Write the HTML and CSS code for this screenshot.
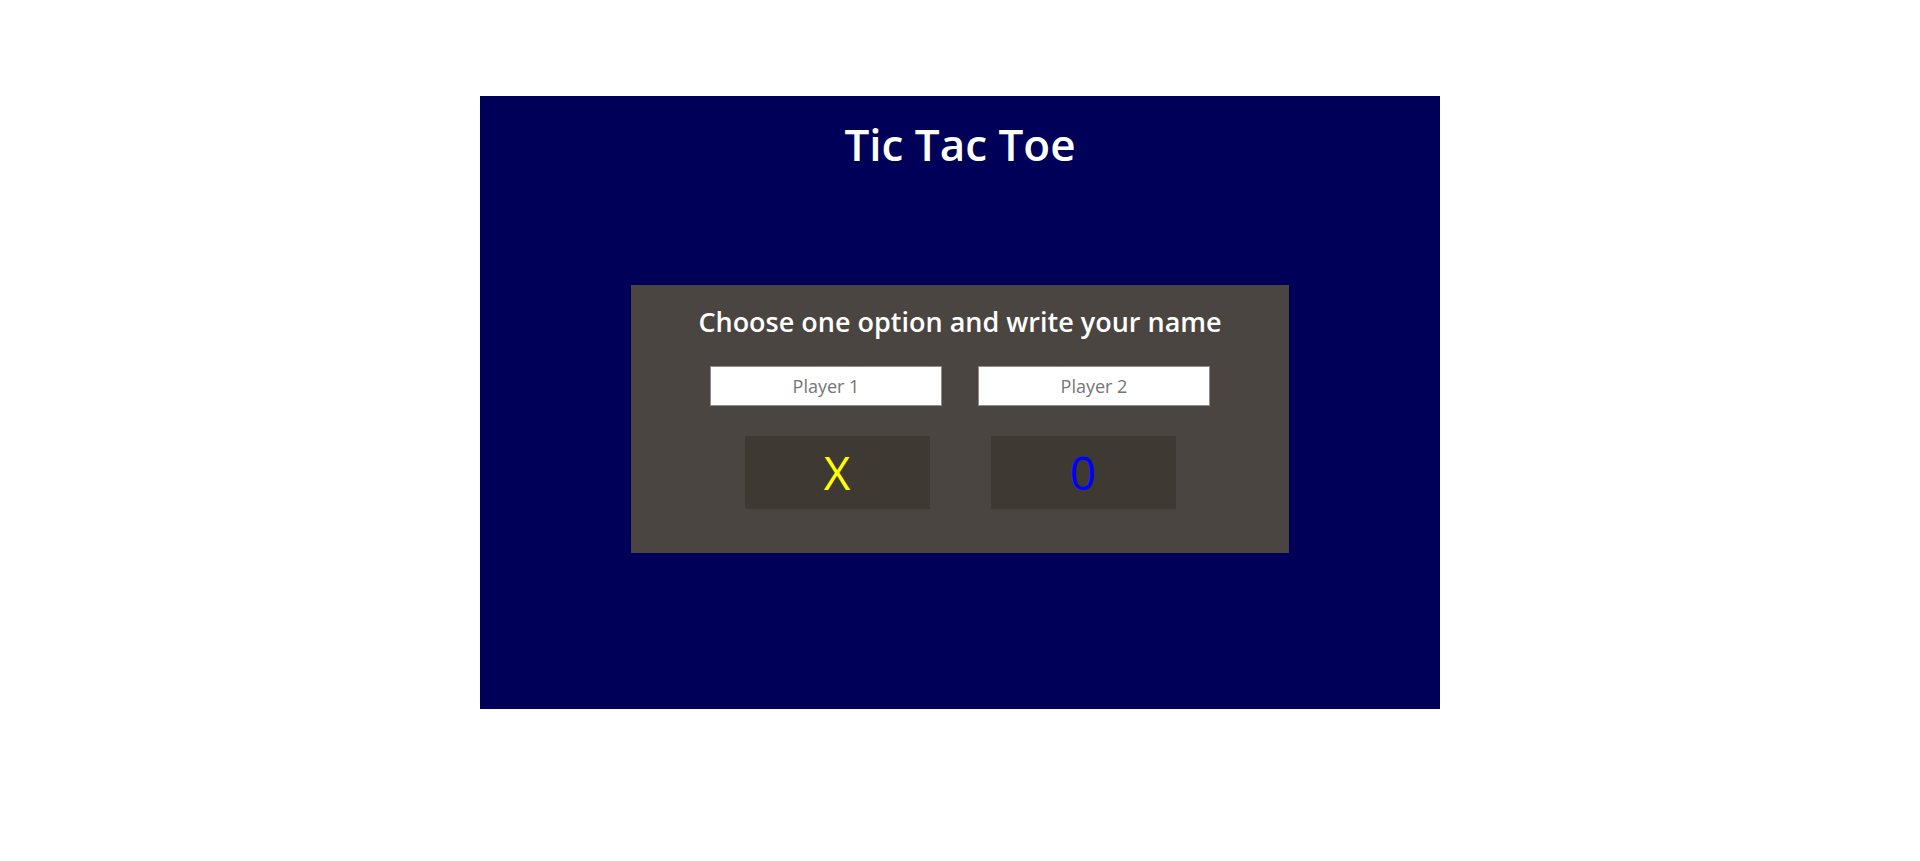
FILE: index.html
```html
<!DOCTYPE html>
<html>
<head>
<meta charset="utf-8">
<title>Tic Tac Toe</title>
<link rel="stylesheet" href="styles.css">
</head>
<body>
<div class="page">
  <main class="board">
    <h1 class="title">Tic Tac Toe</h1>
    <section class="setup">
      <h2 class="setup-title">Choose one option and write your name</h2>
      <div class="names">
        <input class="name-input" type="text" placeholder="Player 1">
        <input class="name-input" type="text" placeholder="Player 2">
      </div>
      <div class="choices">
        <button class="choice choice-x">X</button>
        <button class="choice choice-o">0</button>
      </div>
    </section>
  </main>
</div>
</body>
</html>
```
FILE: styles.css
```css
html, body {
  margin: 0;
  padding: 0;
  background: #ffffff;
}
.page {
  padding-top: 96px;
  font-family: "Open Sans", "Noto Sans", sans-serif;
}
.board {
  width: 960px;
  height: 613px;
  margin: 0 auto;
  background: #000058;
  display: flex;
  flex-direction: column;
  align-items: center;
  padding-top: 16px;
  box-sizing: border-box;
}
.title {
  margin: 0;
  font-size: 44px;
  line-height: 64px;
  font-weight: 600;
  color: #ffffff;
}
.setup {
  margin-top: 109px;
  width: 658px;
  height: 268px;
  box-sizing: border-box;
  padding-top: 17px;
  background: #4a4540;
  display: flex;
  flex-direction: column;
  align-items: center;
}
.setup-title {
  margin: 0;
  font-size: 27px;
  line-height: 40px;
  font-weight: 600;
  color: #ffffff;
}
.names {
  margin-top: 24px;
  display: flex;
  gap: 36px;
}
.name-input {
  width: 232px;
  height: 40px;
  box-sizing: border-box;
  border: 1px solid #8c8c8c;
  background: #ffffff;
  text-align: center;
  font-family: "Open Sans", "Noto Sans", sans-serif;
  font-size: 18px;
  color: #333333;
  padding: 0;
  outline: none;
}
.name-input::placeholder {
  color: #757575;
}
.choices {
  margin-top: 30px;
  display: flex;
  gap: 61px;
}
.choice {
  width: 185px;
  height: 73px;
  border: none;
  background: #3f3934;
  font-family: "Open Sans", "Noto Sans", sans-serif;
  font-size: 46px;
  line-height: 73px;
  padding: 0;
  font-weight: 400;
}
.choice-x { color: #ffff00; }
.choice-o { color: #0000ff; }
```
